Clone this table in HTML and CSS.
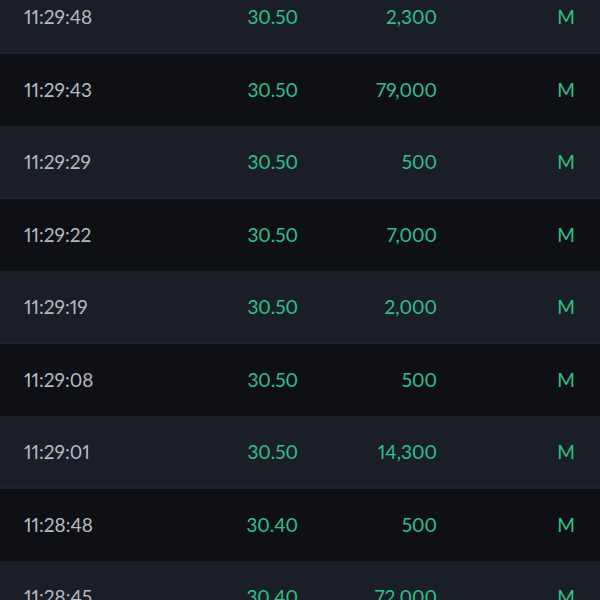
FILE: index.html
```html
<!DOCTYPE html>
<html>
<head>
<meta charset="utf-8">
<link rel="stylesheet" href="styles.css">
</head>
<body>
<div class="trades">
  <div class="row light"><span class="time">11:29:48</span><span class="price">30.50</span><span class="qty">2,300</span><span class="type">M</span></div>
  <div class="row dark"><span class="time">11:29:43</span><span class="price">30.50</span><span class="qty">79,000</span><span class="type">M</span></div>
  <div class="row light"><span class="time">11:29:29</span><span class="price">30.50</span><span class="qty">500</span><span class="type">M</span></div>
  <div class="row dark"><span class="time">11:29:22</span><span class="price">30.50</span><span class="qty">7,000</span><span class="type">M</span></div>
  <div class="row light"><span class="time">11:29:19</span><span class="price">30.50</span><span class="qty">2,000</span><span class="type">M</span></div>
  <div class="row dark"><span class="time">11:29:08</span><span class="price">30.50</span><span class="qty">500</span><span class="type">M</span></div>
  <div class="row light"><span class="time">11:29:01</span><span class="price">30.50</span><span class="qty">14,300</span><span class="type">M</span></div>
  <div class="row dark"><span class="time">11:28:48</span><span class="price">30.40</span><span class="qty">500</span><span class="type">M</span></div>
  <div class="row light"><span class="time">11:28:45</span><span class="price">30.40</span><span class="qty">72,000</span><span class="type">M</span></div>
</div>
</body>
</html>
```
FILE: styles.css
```css
html, body {
  margin: 0;
  padding: 0;
  background: #0e1015;
  overflow: hidden;
}
.trades {
  margin-top: -19px;
  font-family: Lato, "Open Sans", sans-serif;
  font-size: 19px;
  font-variant-numeric: proportional-nums;
}
.row {
  display: grid;
  grid-template-columns: 150px 124px 139px 138px;
  align-items: center;
  height: 72.5px;
  box-sizing: border-box;
  padding: 0 25px 0 24px;
}
.row.light {
  background: #1a1e26;
  border-bottom: 2px solid #1f232b;
}
.row.dark {
  background: #0e1015;
}
.time {
  color: #b6bac2;
}
.price, .qty, .type {
  color: #2fc08d;
  text-align: right;
}
```
